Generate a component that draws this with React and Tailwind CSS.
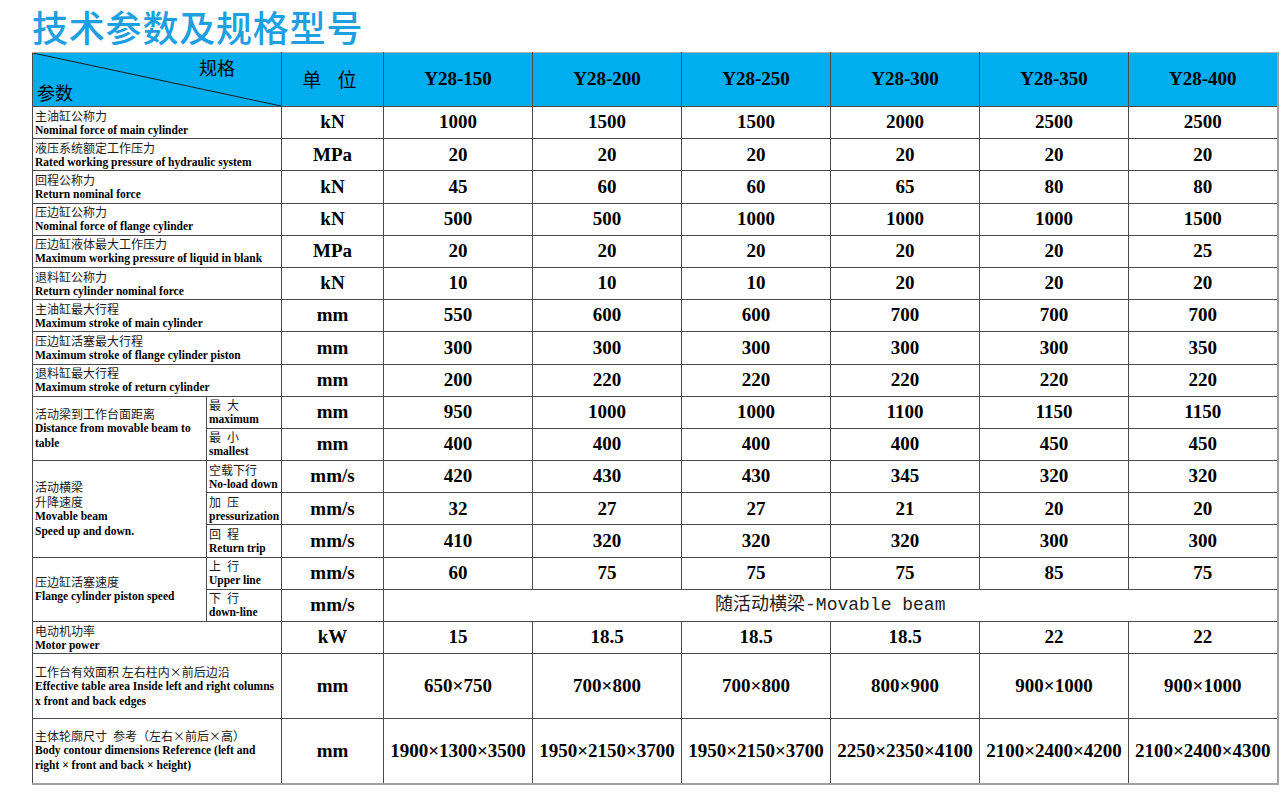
import React from 'react';

const MODELS = ['Y28-150', 'Y28-200', 'Y28-250', 'Y28-300', 'Y28-350', 'Y28-400'];

const ROWS = [
  { cn: '主油缸公称力', en: 'Nominal force of main cylinder', unit: 'kN', v: ['1000', '1500', '1500', '2000', '2500', '2500'] },
  { cn: '液压系统额定工作压力', en: 'Rated working pressure of hydraulic system', unit: 'MPa', v: ['20', '20', '20', '20', '20', '20'] },
  { cn: '回程公称力', en: 'Return nominal force', unit: 'kN', v: ['45', '60', '60', '65', '80', '80'] },
  { cn: '压边缸公称力', en: 'Nominal force of flange cylinder', unit: 'kN', v: ['500', '500', '1000', '1000', '1000', '1500'] },
  { cn: '压边缸液体最大工作压力', en: 'Maximum working pressure of liquid in blank', unit: 'MPa', v: ['20', '20', '20', '20', '20', '25'] },
  { cn: '退料缸公称力', en: 'Return cylinder nominal force', unit: 'kN', v: ['10', '10', '10', '20', '20', '20'] },
  { cn: '主油缸最大行程', en: 'Maximum stroke of main cylinder', unit: 'mm', v: ['550', '600', '600', '700', '700', '700'] },
  { cn: '压边缸活塞最大行程', en: 'Maximum stroke of flange cylinder piston', unit: 'mm', v: ['300', '300', '300', '300', '300', '350'] },
  { cn: '退料缸最大行程', en: 'Maximum stroke of return cylinder', unit: 'mm', v: ['200', '220', '220', '220', '220', '220'] },
];

// 分组行: 左侧合并单元格 + 子项
const GROUPS = [
  {
    label: [['cn', '活动梁到工作台面距离'], ['en', 'Distance from movable beam to'], ['en', 'table']],
    subs: [
      { cn: '最\u2002大', en: 'maximum', unit: 'mm', v: ['950', '1000', '1000', '1100', '1150', '1150'] },
      { cn: '最\u2002小', en: 'smallest', unit: 'mm', v: ['400', '400', '400', '400', '450', '450'] },
    ],
  },
  {
    label: [['cn', '活动横梁'], ['cn', '升降速度'], ['en', 'Movable beam'], ['en', 'Speed up and down.']],
    subs: [
      { cn: '空载下行', en: 'No-load down', unit: 'mm/s', v: ['420', '430', '430', '345', '320', '320'] },
      { cn: '加\u2002压', en: 'pressurization', unit: 'mm/s', v: ['32', '27', '27', '21', '20', '20'] },
      { cn: '回\u2002程', en: 'Return trip', unit: 'mm/s', v: ['410', '320', '320', '320', '300', '300'] },
    ],
  },
  {
    label: [['cn', '压边缸活塞速度'], ['en', 'Flange cylinder piston speed']],
    subs: [
      { cn: '上\u2002行', en: 'Upper line', unit: 'mm/s', v: ['60', '75', '75', '75', '85', '75'] },
      { cn: '下\u2002行', en: 'down-line', unit: 'mm/s', span: '随活动横梁-Movable beam' },
    ],
  },
];

const TAIL = [
  { label: [['cn', '电动机功率'], ['en', 'Motor power']], unit: 'kW', v: ['15', '18.5', '18.5', '18.5', '22', '22'], tall: false },
  {
    label: [['cn', '工作台有效面积 左右柱内×前后边沿'], ['en', 'Effective table area Inside left and right columns'], ['en', 'x front and back edges']],
    unit: 'mm',
    v: ['650×750', '700×800', '700×800', '800×900', '900×1000', '900×1000'],
    tall: true,
  },
  {
    label: [['cn', '主体轮廓尺寸\u2002参考（左右×前后×高）'], ['en', 'Body contour dimensions Reference (left and'], ['en', 'right × front and back × height)']],
    unit: 'mm',
    v: ['1900×1300×3500', '1950×2150×3700', '1950×2150×3700', '2250×2350×4100', '2100×2400×4200', '2100×2400×4300'],
    tall: true,
  },
];

const CN = "text-[12px] leading-[15px] font-['Noto_Sans_CJK_SC',sans-serif] text-[#1a1a1a] whitespace-nowrap";
const EN = "text-[11.5px] leading-[15px] font-bold font-['Liberation_Serif',serif] text-black whitespace-nowrap";
const CELL = 'border border-[#4a4a4a]';
const VAL = `${CELL} text-center align-middle text-[19px] font-bold font-['Liberation_Serif',serif] text-black whitespace-nowrap`;

function Label({ lines }) {
  return (
    <div>
      {lines.map(([kind, text], i) => (
        <div key={i} className={kind === 'cn' ? CN : EN}>
          {text}
        </div>
      ))}
    </div>
  );
}

function Values({ v }) {
  return v.map((x, i) => (
    <td key={i} className={VAL}>
      {x}
    </td>
  ));
}

export default function App() {
  return (
    <div className="w-[1285px] h-[795px] bg-white pl-[32px] overflow-hidden">
      <h1 className="h-[52px] leading-[52px] text-[36px] font-medium tracking-[0.8px] text-[#1d9fe2] font-['Noto_Sans_CJK_SC',sans-serif]">
        技术参数及规格型号
      </h1>
      <table className="table-fixed border-collapse w-[1245px] border-r-2 border-b-2 border-r-[#a0a0a0] border-b-[#a0a0a0]">
        <colgroup>
          <col className="w-[174px]" />
          <col className="w-[75px]" />
          <col className="w-[102px]" />
          {MODELS.map((m) => (
            <col key={m} className="w-[149px]" />
          ))}
        </colgroup>
        <thead>
          <tr className="h-[54px] bg-[#00adef]">
            <th colSpan={2} className={`${CELL} border-t-[#b0b0b0] relative p-0 font-normal`}>
              <svg className="absolute inset-0 w-full h-full" viewBox="0 0 249 54" preserveAspectRatio="none">
                <line x1="0" y1="0" x2="249" y2="54" stroke="#1a1a1a" strokeWidth="1" />
              </svg>
              <span className="absolute right-[46px] top-[3px] text-[18px] leading-[22px] font-['Noto_Sans_CJK_SC',sans-serif] text-black">
                规格
              </span>
              <span className="absolute left-[4px] bottom-[3px] text-[18px] leading-[22px] font-['Noto_Sans_CJK_SC',sans-serif] text-black">
                参数
              </span>
            </th>
            <th className={`${CELL} border-t-[#b0b0b0] font-normal text-[19px] tracking-[6px] font-['Noto_Sans_CJK_SC',sans-serif] text-black`}>
              单 位
            </th>
            {MODELS.map((m) => (
              <th key={m} className={`${CELL} border-t-[#b0b0b0] text-[19px] font-bold font-['Liberation_Serif',serif] text-black`}>
                {m}
              </th>
            ))}
          </tr>
        </thead>
        <tbody>
          {ROWS.map((r) => (
            <tr key={r.en} className="h-[32.2px]">
              <td colSpan={2} className={`${CELL} px-[2px] align-middle`}>
                <Label lines={[['cn', r.cn], ['en', r.en]]} />
              </td>
              <td className={VAL}>{r.unit}</td>
              <Values v={r.v} />
            </tr>
          ))}
          {GROUPS.map((g) =>
            g.subs.map((s, i) => (
              <tr key={s.en} className="h-[32.2px]">
                {i === 0 && (
                  <td rowSpan={g.subs.length} className={`${CELL} px-[2px] align-middle`}>
                    <Label lines={g.label} />
                  </td>
                )}
                <td className={`${CELL} px-[2px] align-middle`}>
                  <Label lines={[['cn', s.cn], ['en', s.en]]} />
                </td>
                <td className={VAL}>{s.unit}</td>
                {s.span ? (
                  <td colSpan={6} className={`${CELL} text-center align-middle text-[18px] font-['Liberation_Mono','Noto_Sans_CJK_SC',monospace] text-[#222]`}>
                    {s.span}
                  </td>
                ) : (
                  <Values v={s.v} />
                )}
              </tr>
            ))
          )}
          {TAIL.map((t) => (
            <tr key={t.unit + t.v[0]} className={t.tall ? 'h-[65px]' : 'h-[32.2px]'}>
              <td colSpan={2} className={`${CELL} px-[2px] align-middle`}>
                <Label lines={t.label} />
              </td>
              <td className={VAL}>{t.unit}</td>
              <Values v={t.v} />
            </tr>
          ))}
        </tbody>
      </table>
    </div>
  );
}
